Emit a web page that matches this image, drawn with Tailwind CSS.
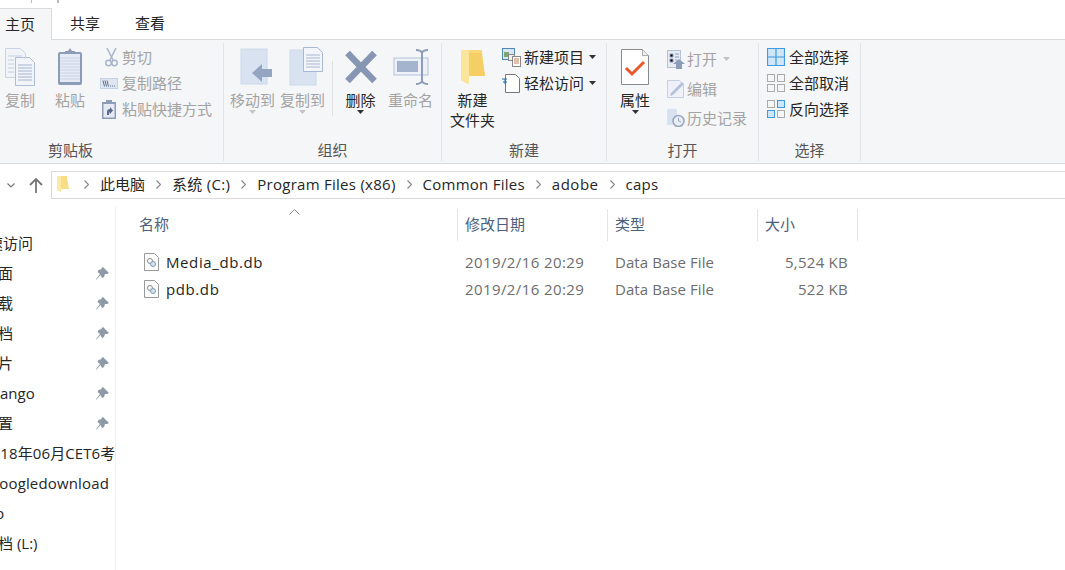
<!DOCTYPE html>
<html lang="zh-CN">
<head>
    <meta charset="UTF-8">
    <title>caps</title>
    <script src="https://cdn.jsdelivr.net/npm/@tailwindcss/browser@4"></script>
</head>
<body class="bg-white">
<div class="w-[1065px] h-[570px] overflow-hidden bg-white text-[15px] leading-5 text-[#262626] font-['Open_Sans','Noto_Sans_CJK_SC',sans-serif]">

    <!-- Tabs -->
    <div class="h-[40px] flex border-b border-[#dadbdc] relative">
        <div class="absolute left-[31px] top-0 w-px h-[3px] bg-[#bbb]"></div>
        <div class="absolute left-[57px] top-0 w-[2px] h-[3px] bg-[#bbb]"></div>
        <div class="w-[52px] h-[32px] mt-[8px] pl-[5px] pt-[5px] bg-[#f5f6f7] border-t border-r border-[#dadbdc]">主页</div>
        <div class="ml-[18px] mt-[13px]">共享</div>
        <div class="ml-[35px] mt-[13px]">查看</div>
    </div>

    <!-- Ribbon -->
    <div class="h-[124px] bg-[#f5f6f7] border-b border-[#dadbdc] flex items-start pt-[3px]">

        <!-- Clipboard -->
        <div class="w-[224px] h-[118px] pb-px border-r border-[#e2e4e7] flex flex-col">
            <div class="flex-1 flex pt-px text-[#a3a3a3]">
                <div class="w-[40px] flex flex-col items-center">
                    <div class="h-[46px] flex items-center">
                        <svg width="32" height="38" viewBox="0 0 32 38">
                            <path d="M1.500 .5h15l5 5v24h-20z" fill="#f0f3f8" stroke="#c9d4e6"/>
                            <path d="M4 8h14M4 12h6M4 16h6M4 20h6M4 24h6" stroke="#c3cfe2"/>
                            <path d="M11.500 9.500h14l5 5v23h-19z" fill="#f1f4f9" stroke="#aebcd6"/>
                            <path d="M14 17h14M14 20h14M14 23h14M14 26h14M14 29h14M14 32h14" stroke="#a5b4ce"/>
                        </svg>
                    </div>
                    <span>复制</span>
                </div>
                <div class="w-[40px] ml-[10px] flex flex-col items-center">
                    <div class="h-[46px] flex items-center">
                        <svg width="26" height="38" viewBox="0 0 26 38">
                            <rect x="1" y="4" width="24" height="33" rx="2" fill="#8c9cb9"/>
                            <rect x="3" y="6" width="20" height="28" fill="#e5eaf4"/>
                            <path d="M3 10h20M3 13h20M3 16h20M3 19h20M3 22h20M3 25h20M3 28h20M3 31h20" stroke="#cbd4e6"/>
                            <path d="M8 6V3h3l2-3 2 3h3v3z" fill="#8c9cb9"/>
                        </svg>
                    </div>
                    <span>粘贴</span>
                </div>
                <div class="ml-[10px] flex flex-col">
                    <div class="h-[26px] flex items-center">
                        <div class="w-[22px] flex justify-center">
                            <svg width="13" height="19" viewBox="0 0 13 19" fill="none" stroke="#a9b5ca" stroke-width="1.500">
                                <path d="M2 0l6 12M11 0L5 12"/>
                                <circle cx="3.500" cy="15" r="2.700"/>
                                <circle cx="9.500" cy="15" r="2.700"/>
                            </svg>
                        </div>
                        <span>剪切</span>
                    </div>
                    <div class="h-[26px] flex items-center">
                        <div class="w-[22px]">
                            <svg width="18" height="11" viewBox="0 0 18 11">
                                <rect width="18" height="11" fill="#c5d1e6"/>
                                <rect x="1" y="1" width="16" height="9" fill="#dfe6f2"/>
                                <path d="M3 2.500l1.500 6M5 2.500l1.500 6M7 2.500l1.500 6" stroke="#5f6f8c"/>
                                <path d="M10 8h1M12 8h1M14 8h1" stroke="#5f6f8c"/>
                            </svg>
                        </div>
                        <span>复制路径</span>
                    </div>
                    <div class="h-[26px] flex items-center">
                        <div class="w-[22px] pl-[2px]">
                            <svg width="14" height="19" viewBox="0 0 14 19">
                                <rect y="2" width="14" height="17" fill="#8c9cb9"/>
                                <rect x="1.500" y="4" width="11" height="13.500" fill="#e5eaf4"/>
                                <path d="M4 0h6v4H4z" fill="#8c9cb9"/>
                                <path d="M5 15v-3q0-3 3-3V7l3 3.500-3 3.500v-2q-1 0-1 3z" fill="#5a6c8c"/>
                            </svg>
                        </div>
                        <span class="whitespace-nowrap">粘贴快捷方式</span>
                    </div>
                </div>
            </div>
            <div class="h-5 pl-[48px] text-[#555]">剪贴板</div>
        </div>

        <!-- Organize -->
        <div class="w-[218px] h-[118px] pb-px border-r border-[#e2e4e7] flex flex-col">
            <div class="flex-1 flex pt-px pl-[6px] text-[#a3a3a3]">
                <div class="w-[45px] flex flex-col items-center">
                    <div class="h-[46px] flex items-center pl-[6px]">
                        <svg width="32" height="38" viewBox="0 0 32 38">
                            <rect x="1" y="1" width="26" height="35" fill="#d8e2f1" stroke="#ccd8ea"/>
                            <path d="M12 25l10-9v5h10v8H22v5z" fill="#94a5c2"/>
                        </svg>
                    </div>
                    <span class="whitespace-nowrap">移动到</span>
                    <svg width="7" height="4" viewBox="0 0 7 4"><path d="M0 0h7L3.500 4z" fill="#c4c4c4"/></svg>
                </div>
                <div class="w-[45px] ml-[5px] flex flex-col items-center">
                    <div class="h-[46px] flex items-center pl-[6px]">
                        <svg width="34" height="40" viewBox="0 0 34 40">
                            <rect x="1" y="3" width="26" height="35" fill="#d8e2f1" stroke="#ccd8ea"/>
                            <path d="M14.500 .5h14l5 5v19h-19z" fill="#f2f5fa" stroke="#a9b8d2"/>
                            <path d="M17 8h14M17 11h14M17 14h14M17 17h14M17 20h14" stroke="#a9b8d2"/>
                        </svg>
                    </div>
                    <span class="whitespace-nowrap">复制到</span>
                    <svg width="7" height="4" viewBox="0 0 7 4"><path d="M0 0h7L3.500 4z" fill="#c4c4c4"/></svg>
                </div>
                <div class="w-px h-[55px] mt-[17px] ml-[7px] bg-[#dfe1e4]"></div>
                <div class="w-[45px] ml-[5px] flex flex-col items-center text-[#262626]">
                    <div class="h-[46px] flex items-center">
                        <svg width="32" height="34" viewBox="0 0 32 34">
                            <path d="M2.500 3l27 28M29.500 3l-27 28" stroke="#8796b2" stroke-width="6.500"/>
                        </svg>
                    </div>
                    <span>删除</span>
                    <svg width="7" height="4" viewBox="0 0 7 4"><path d="M0 0h7L3.500 4z" fill="#333"/></svg>
                </div>
                <div class="w-[45px] ml-[5px] flex flex-col items-center">
                    <div class="h-[46px] flex items-center">
                        <svg width="36" height="36" viewBox="0 0 36 36">
                            <rect x="1" y="9" width="34" height="17" fill="#eef2f8" stroke="#b4c1d8"/>
                            <rect x="4" y="12" width="21" height="11" fill="#a5b4ce"/>
                            <path d="M23 1q5 0 6 3 1-3 6-3M29 4v28M23 35q5 0 6-3 1 3 6 3" fill="none" stroke="#8c9cb9" stroke-width="2"/>
                        </svg>
                    </div>
                    <span class="whitespace-nowrap">重命名</span>
                </div>
            </div>
            <div class="h-5 text-center text-[#555]">组织</div>
        </div>

        <!-- New -->
        <div class="w-[165px] h-[118px] pb-px border-r border-[#e2e4e7] flex flex-col">
            <div class="flex-1 flex pt-px pl-[8px]">
                <div class="w-[45px] flex flex-col items-center">
                    <div class="h-[46px] flex items-center">
                        <svg width="24" height="34" viewBox="0 0 24 34">
                            <path d="M0 0h21v10l3 16H7v8L0 30z" fill="#f8d978"/>
                            <path d="M8 3h13l3 23H8z" fill="#f5cf66"/>
                            <path d="M0 0h8v34L0 30z" fill="#fbe59c"/>
                        </svg>
                    </div>
                    <span>新建</span>
                    <span class="whitespace-nowrap">文件夹</span>
                </div>
                <div class="ml-[7px] flex flex-col">
                    <div class="h-[26px] flex items-center">
                        <div class="w-[22px]">
                            <svg width="19" height="19" viewBox="0 0 19 19">
                                <rect x=".5" y=".5" width="12" height="11" fill="#dbe6f3" stroke="#4f86b8"/>
                                <rect x="2" y="4" width="5" height="5" fill="#7fa56f"/>
                                <rect x="6.500" y="6.500" width="6" height="6" fill="#eee" stroke="#888"/>
                                <rect x="10.500" y="8.500" width="8" height="10" fill="#fff" stroke="#888"/>
                                <path d="M12 11h5M12 13h5M12 15h5" stroke="#c77f5a"/>
                            </svg>
                        </div>
                        <span class="whitespace-nowrap">新建项目</span>
                        <svg class="ml-[5px]" width="7" height="4" viewBox="0 0 7 4"><path d="M0 0h7L3.500 4z" fill="#333"/></svg>
                    </div>
                    <div class="h-[26px] flex items-center">
                        <div class="w-[22px]">
                            <svg width="18" height="19" viewBox="0 0 18 19">
                                <path d="M3.500 .5h10l4 4v14h-14z" fill="#fff" stroke="#777"/>
                                <path d="M0 5h5M1 8h4" stroke="#2a6ea8" stroke-width="1.200"/>
                                <path d="M3 5v5" stroke="#2a6ea8"/>
                            </svg>
                        </div>
                        <span class="whitespace-nowrap">轻松访问</span>
                        <svg class="ml-[5px]" width="7" height="4" viewBox="0 0 7 4"><path d="M0 0h7L3.500 4z" fill="#333"/></svg>
                    </div>
                </div>
            </div>
            <div class="h-5 text-center text-[#555]">新建</div>
        </div>

        <!-- Open -->
        <div class="w-[152px] h-[118px] pb-px border-r border-[#e2e4e7] flex flex-col">
            <div class="flex-1 flex pt-px pl-[13px]">
                <div class="w-[30px] flex flex-col items-center">
                    <div class="h-[46px] flex items-center">
                        <svg width="28" height="36" viewBox="0 0 28 36">
                            <path d="M.5 .5h21l6 6v29H.5z" fill="#fff" stroke="#8a8a8a"/>
                            <path d="M21.500 .5v6h6" fill="#eee" stroke="#aaa"/>
                            <path d="M5 19l6 6L23 13" fill="none" stroke="#e8582a" stroke-width="3"/>
                        </svg>
                    </div>
                    <span>属性</span>
                    <svg width="7" height="4" viewBox="0 0 7 4"><path d="M0 0h7L3.500 4z" fill="#333"/></svg>
                </div>
                <div class="ml-[15px] flex flex-col text-[#a3a3a3]">
                    <div class="h-[30px] flex items-center">
                        <div class="w-[22px] pl-[2px]">
                            <svg width="18" height="19" viewBox="0 0 18 19">
                                <rect x=".5" y=".5" width="13" height="17" fill="#e6ebf4" stroke="#b4c1d8"/>
                                <path d="M3 4h3v3H3zM3 9h3v3H3zM8 4h4M8 7h4M8 10h2" stroke="#8c9cb9"/>
                                <path d="M6 14l6-5 6 5h-3v5H9v-5z" fill="#8c9cb9"/>
                            </svg>
                        </div>
                        <span>打开</span>
                        <svg class="ml-[6px]" width="7" height="4" viewBox="0 0 7 4"><path d="M0 0h7L3.500 4z" fill="#c4c4c4"/></svg>
                    </div>
                    <div class="h-[29px] flex items-center">
                        <div class="w-[22px] pl-[2px]">
                            <svg width="18" height="18" viewBox="0 0 18 18">
                                <path d="M.5 .5h12l4 4v13H.5z" fill="#eef2f8" stroke="#c3cfe2"/>
                                <path d="M4 13L15 2l2 2L6 15l-3 1z" fill="#b4c1d8"/>
                            </svg>
                        </div>
                        <span>编辑</span>
                    </div>
                    <div class="h-[30px] flex items-center">
                        <div class="w-[22px] pl-[2px]">
                            <svg width="18" height="18" viewBox="0 0 18 18">
                                <rect y="0" width="10" height="16" fill="#d8e2f1"/>
                                <circle cx="11.500" cy="12" r="5.500" fill="#e9edf4" stroke="#98a6bf" stroke-width="1.500"/>
                                <path d="M11.500 9v3l2.500 1" fill="none" stroke="#98a6bf"/>
                            </svg>
                        </div>
                        <span class="whitespace-nowrap">历史记录</span>
                    </div>
                </div>
            </div>
            <div class="h-5 text-center text-[#555]">打开</div>
        </div>

        <!-- Select -->
        <div class="w-[102px] h-[118px] pb-px border-r border-[#e2e4e7] flex flex-col">
            <div class="flex-1 flex flex-col pt-px pl-[8px]">
                <div class="h-[26px] flex items-center">
                    <div class="w-[22px]">
                        <svg width="18" height="18" viewBox="0 0 18 18">
                            <path d="M.5 .5h17v17H.5zM9 .5v17M.5 9h17" fill="#cfe5f8" stroke="#3d9be0" stroke-width="1.200"/>
                        </svg>
                    </div>
                    <span class="whitespace-nowrap">全部选择</span>
                </div>
                <div class="h-[26px] flex items-center">
                    <div class="w-[22px]">
                        <svg width="18" height="18" viewBox="0 0 18 18" fill="none" stroke="#aaa">
                            <rect x=".5" y=".5" width="7" height="7"/>
                            <rect x="10.500" y=".5" width="7" height="7"/>
                            <rect x=".5" y="10.500" width="7" height="7"/>
                            <rect x="10.500" y="10.500" width="7" height="7"/>
                        </svg>
                    </div>
                    <span class="whitespace-nowrap">全部取消</span>
                </div>
                <div class="h-[26px] flex items-center">
                    <div class="w-[22px]">
                        <svg width="18" height="18" viewBox="0 0 18 18" fill="none" stroke="#aaa">
                            <rect x=".5" y=".5" width="7" height="7"/>
                            <rect x="10.500" y=".5" width="7" height="7" fill="#cfe5f8" stroke="#3d9be0"/>
                            <rect x=".5" y="10.500" width="7" height="7" fill="#cfe5f8" stroke="#3d9be0"/>
                            <rect x="10.500" y="10.500" width="7" height="7"/>
                        </svg>
                    </div>
                    <span class="whitespace-nowrap">反向选择</span>
                </div>
            </div>
            <div class="h-5 text-center text-[#555]">选择</div>
        </div>
    </div>

    <!-- Address bar -->
    <div class="h-[28px] mt-[7px] flex items-center">
        <svg class="ml-[7px]" width="8" height="5" viewBox="0 0 8 5" fill="none" stroke="#777" stroke-width="1.200"><path d="M.5 .5L4 4 7.500 .5"/></svg>
        <svg class="ml-[14px]" width="14" height="15" viewBox="0 0 14 15" fill="none" stroke="#777" stroke-width="1.800"><path d="M7 15V1M1 7l6-6 6 6"/></svg>
        <div class="ml-[8px] flex-1 h-[28px] pb-[2px] border border-r-0 border-[#d9d9d9] flex items-center pl-[5px] whitespace-nowrap">
            <svg width="12" height="16" viewBox="0 0 12 16"><path d="M0 0h10v2l2 11H4v3l-4-2z" fill="#f9dd84"/><path d="M0 0h4v16l-4-2z" fill="#fbe9a8"/></svg>
            <svg class="ml-[15px]" width="5" height="9" viewBox="0 0 5 9" fill="none" stroke="#888" stroke-width="1.200"><path d="M.5 .5l4 4-4 4"/></svg>
            <span class="ml-[11px]">此电脑</span>
            <svg class="ml-[11px]" width="5" height="9" viewBox="0 0 5 9" fill="none" stroke="#888" stroke-width="1.200"><path d="M.5 .5l4 4-4 4"/></svg>
            <span class="ml-[11px] tracking-[0.3px]">系统 (C:)</span>
            <svg class="ml-[11px]" width="5" height="9" viewBox="0 0 5 9" fill="none" stroke="#888" stroke-width="1.200"><path d="M.5 .5l4 4-4 4"/></svg>
            <span class="ml-[11px] tracking-[0.27px]">Program Files (x86)</span>
            <svg class="ml-[11px]" width="5" height="9" viewBox="0 0 5 9" fill="none" stroke="#888" stroke-width="1.200"><path d="M.5 .5l4 4-4 4"/></svg>
            <span class="ml-[11px] tracking-[0.25px]">Common Files</span>
            <svg class="ml-[11px]" width="5" height="9" viewBox="0 0 5 9" fill="none" stroke="#888" stroke-width="1.200"><path d="M.5 .5l4 4-4 4"/></svg>
            <span class="ml-[11px] tracking-[0.5px]">adobe</span>
            <svg class="ml-[11px]" width="5" height="9" viewBox="0 0 5 9" fill="none" stroke="#888" stroke-width="1.200"><path d="M.5 .5l4 4-4 4"/></svg>
            <span class="ml-[11px] tracking-[0.25px]">caps</span>
        </div>
    </div>

    <div class="flex h-[371px] mt-[8px]">
        <!-- Navigation pane -->
        <div class="w-[116px] shrink-0 border-r border-[#f0f0f0] pt-[21px] overflow-hidden">
            <div class="h-[30px] flex items-center"><span class="ml-[-27px] whitespace-nowrap">快速访问</span></div>
            <div class="h-[30px] flex items-center pr-[6px]"><span class="ml-[-17px] whitespace-nowrap">桌面</span>
                <svg class="ml-auto" width="13" height="13" viewBox="0 0 13 13"><path d="M7 0l6 6-2 1-2 0-1 3-2 1-1.500-3L1 12l-1 1 .5-1.500L4 7 1.500 5l1-2 3-1 0-1z" fill="#8d99a6"/></svg></div>
            <div class="h-[30px] flex items-center pr-[6px]"><span class="ml-[-17px] whitespace-nowrap">下载</span>
                <svg class="ml-auto" width="13" height="13" viewBox="0 0 13 13"><path d="M7 0l6 6-2 1-2 0-1 3-2 1-1.500-3L1 12l-1 1 .5-1.500L4 7 1.500 5l1-2 3-1 0-1z" fill="#8d99a6"/></svg></div>
            <div class="h-[30px] flex items-center pr-[6px]"><span class="ml-[-17px] whitespace-nowrap">文档</span>
                <svg class="ml-auto" width="13" height="13" viewBox="0 0 13 13"><path d="M7 0l6 6-2 1-2 0-1 3-2 1-1.500-3L1 12l-1 1 .5-1.500L4 7 1.500 5l1-2 3-1 0-1z" fill="#8d99a6"/></svg></div>
            <div class="h-[30px] flex items-center pr-[6px]"><span class="ml-[-17px] whitespace-nowrap">图片</span>
                <svg class="ml-auto" width="13" height="13" viewBox="0 0 13 13"><path d="M7 0l6 6-2 1-2 0-1 3-2 1-1.500-3L1 12l-1 1 .5-1.500L4 7 1.500 5l1-2 3-1 0-1z" fill="#8d99a6"/></svg></div>
            <div class="h-[30px] flex items-center pr-[6px]"><span class="ml-[-13px] whitespace-nowrap">django</span>
                <svg class="ml-auto" width="13" height="13" viewBox="0 0 13 13"><path d="M7 0l6 6-2 1-2 0-1 3-2 1-1.500-3L1 12l-1 1 .5-1.500L4 7 1.500 5l1-2 3-1 0-1z" fill="#8d99a6"/></svg></div>
            <div class="h-[30px] flex items-center pr-[6px]"><span class="ml-[-17px] whitespace-nowrap">配置</span>
                <svg class="ml-auto" width="13" height="13" viewBox="0 0 13 13"><path d="M7 0l6 6-2 1-2 0-1 3-2 1-1.500-3L1 12l-1 1 .5-1.500L4 7 1.500 5l1-2 3-1 0-1z" fill="#8d99a6"/></svg></div>
            <div class="h-[30px] flex items-center"><span class="ml-[-17px] whitespace-nowrap tracking-[0.1px]">2018年06月CET6考试</span></div>
            <div class="h-[30px] flex items-center"><span class="ml-[-9px] whitespace-nowrap tracking-[0.15px]">googledownload</span></div>
            <div class="h-[30px] flex items-center"><span class="ml-[-5px] whitespace-nowrap">p</span></div>
            <div class="h-[30px] flex items-center"><span class="ml-[-17px] whitespace-nowrap">文档 (L:)</span></div>
        </div>

        <!-- File list -->
        <div class="flex-1 text-[#6d6d6d]">
            <div class="relative h-[32px] mt-[2px] flex text-[#4c607a]">
                <svg class="absolute left-[173px] top-0" width="11" height="6" viewBox="0 0 11 6" fill="none" stroke="#888"><path d="M.5 5.500l5-5 5 5"/></svg>
                <div class="w-[342px] pb-[2px] border-r border-[#e5e5e5] pl-[23px] flex items-center">名称</div>
                <div class="w-[150px] pb-[2px] border-r border-[#e5e5e5] pl-[7px] flex items-center">修改日期</div>
                <div class="w-[150px] pb-[2px] border-r border-[#e5e5e5] pl-[7px] flex items-center">类型</div>
                <div class="w-[100px] pb-[2px] border-r border-[#e5e5e5] pl-[7px] flex items-center">大小</div>
            </div>
            <div class="mt-[7px] flex h-[27px] items-center">
                <div class="w-[342px] pl-[28px] flex items-center text-[#1f1f1f]">
                    <svg width="15" height="18" viewBox="0 0 15 18"><path d="M.5 .5h10l4 4v13H.5z" fill="#fbfbfb" stroke="#9a9a9a"/><circle cx="6" cy="8" r="2.500" fill="none" stroke="#8a8a8a"/><circle cx="9" cy="11" r="2.500" fill="#d5e3f0" stroke="#7d9ab5"/></svg>
                    <span class="ml-[7px] tracking-[0.6px]">Media_db.db</span>
                </div>
                <div class="w-[150px] pl-[7px] tracking-[0.4px]">2019/2/16 20:29</div>
                <div class="w-[150px] pl-[7px] tracking-[0.07px]">Data Base File</div>
                <div class="w-[100px] pr-[10px] text-right tracking-[0.25px]">5,524 KB</div>
            </div>
            <div class="flex h-[27px] items-center">
                <div class="w-[342px] pl-[28px] flex items-center text-[#1f1f1f]">
                    <svg width="15" height="18" viewBox="0 0 15 18"><path d="M.5 .5h10l4 4v13H.5z" fill="#fbfbfb" stroke="#9a9a9a"/><circle cx="6" cy="8" r="2.500" fill="none" stroke="#8a8a8a"/><circle cx="9" cy="11" r="2.500" fill="#d5e3f0" stroke="#7d9ab5"/></svg>
                    <span class="ml-[7px] tracking-[0.6px]">pdb.db</span>
                </div>
                <div class="w-[150px] pl-[7px] tracking-[0.4px]">2019/2/16 20:29</div>
                <div class="w-[150px] pl-[7px] tracking-[0.07px]">Data Base File</div>
                <div class="w-[100px] pr-[10px] text-right tracking-[0.25px]">522 KB</div>
            </div>
        </div>
    </div>
</div>
</body>
</html>
